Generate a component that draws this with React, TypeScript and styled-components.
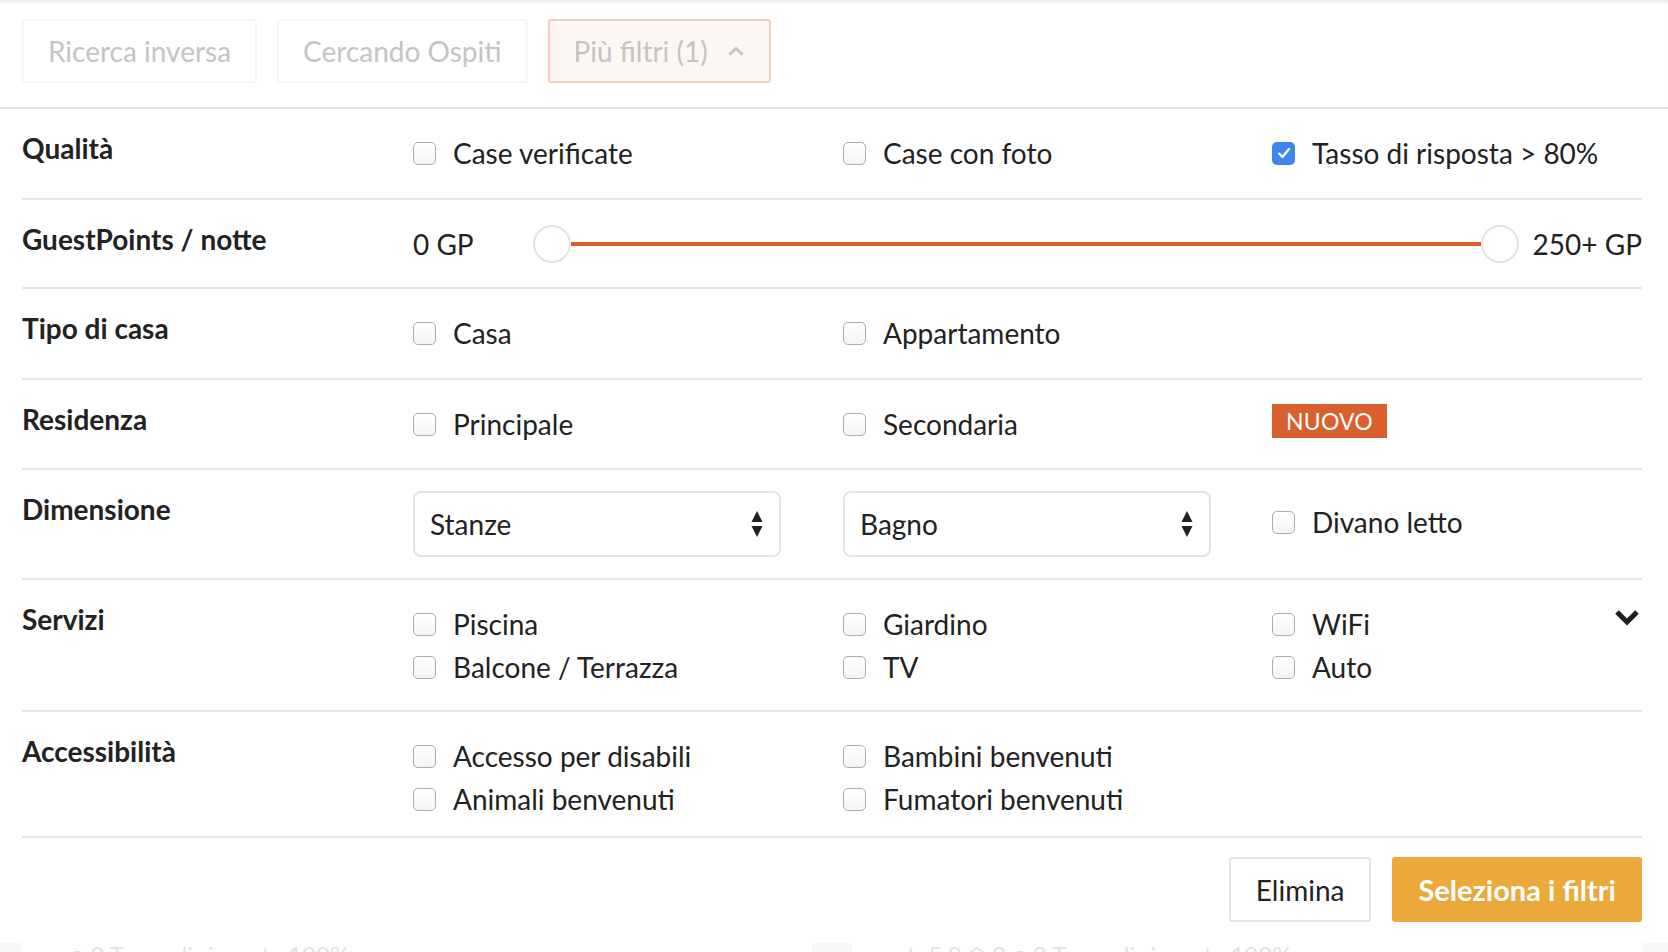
import React from "react";
import styled, { createGlobalStyle } from "styled-components";

const Global = createGlobalStyle`
  html, body { margin: 0; padding: 0; background: #fff; }
  body { font-family: Lato, "Open Sans", "Liberation Sans", sans-serif; color: #222; }
  * { box-sizing: border-box; }
`;

const Page = styled.div`
  width: 1668px;
  height: 952px;
  overflow: hidden;
  background: #fff;
  display: flex;
  flex-direction: column;
`;

const TabBar = styled.div`
  height: 109px;
  display: flex;
  gap: 20px;
  padding: 19px 22px 0;
  border-bottom: 2px solid #e4e4e4;
  box-shadow: inset 0 4px 4px -3px rgba(0, 0, 0, 0.14);
  flex-shrink: 0;
`;

const Tab = styled.button<{ $active?: boolean }>`
  height: 64px;
  padding: 0 24px;
  display: flex;
  align-items: center;
  gap: 19px;
  font-family: inherit;
  font-size: 28px;
  color: #c4c4c4;
  background: ${(p) => (p.$active ? "#fdf7f4" : "#fff")};
  border: 2px solid ${(p) => (p.$active ? "#f5cdbd" : "#f6f6f6")};
  border-radius: 3px;
`;

const Content = styled.div`
  padding: 0 26px 0 22px;
`;

const Row = styled.div<{ $h: number }>`
  height: ${(p) => p.$h}px;
  display: grid;
  grid-template-columns: 391px 430px 429px 1fr;
  align-items: start;
  padding-top: 21px;
  border-bottom: 2px solid #e6e6e6;
`;

const Label = styled.div`
  margin-top: 3px;
  font-size: 28px;
  font-weight: 700;
  line-height: 30px;
  color: #222;
`;

const Options = styled.div<{ $top?: number }>`
  margin-top: ${(p) => p.$top ?? 4}px;
  display: flex;
  flex-direction: column;
  gap: 5px;
`;

const Option = styled.label`
  height: 38px;
  display: flex;
  align-items: center;
  gap: 17px;
  font-size: 28px;
  color: #222;
  white-space: nowrap;
`;

const Box = styled.span<{ $checked?: boolean }>`
  width: 23px;
  height: 23px;
  flex-shrink: 0;
  border-radius: 5px;
  display: flex;
  align-items: center;
  justify-content: center;
  background: ${(p) => (p.$checked ? "#3d85f0" : "linear-gradient(#fff, #f4f4f4)")};
  border: ${(p) => (p.$checked ? "none" : "1.5px solid #adadad")};
`;

const Badge = styled.span`
  margin-top: 3px;
  width: 115px;
  height: 34px;
  display: flex;
  align-items: center;
  justify-content: center;
  background: #d9602c;
  color: #fff;
  font-size: 23px;
  letter-spacing: 0.2px;
`;

const SliderWrap = styled.div`
  grid-column: 2 / 5;
  margin-top: 4px;
  height: 38px;
  display: flex;
  align-items: center;
  font-size: 28px;
  color: #222;
`;

const Track = styled.div`
  flex: 1;
  height: 38px;
  margin: 0 14px 0 59px;
  display: flex;
  align-items: center;
`;

const Thumb = styled.span`
  width: 38px;
  height: 38px;
  border-radius: 50%;
  background: #fff;
  border: 2px solid #e2e2e2;
  flex-shrink: 0;
`;

const Line = styled.span`
  flex: 1;
  height: 4px;
  background: #d9602c;
`;

const Select = styled.div`
  width: 368px;
  height: 66px;
  border: 2px solid #e4e4e4;
  border-radius: 8px;
  padding: 0 16px 0 15px;
  display: flex;
  align-items: center;
  justify-content: space-between;
  font-size: 28px;
  color: #222;
`;

const CellRow = styled.div`
  display: flex;
  justify-content: space-between;
  align-items: flex-start;
`;

const Chevron = styled.span`
  margin-top: 8px;
  margin-right: 2px;
  display: flex;
`;

const Actions = styled.div`
  display: flex;
  justify-content: flex-end;
  gap: 21px;
  padding: 19px 26px 0 22px;
  height: 105px;
  flex-shrink: 0;
`;

const Button = styled.button<{ $primary?: boolean }>`
  height: 65px;
  padding: 0 ${(p) => (p.$primary ? 24 : 25)}px;
  font-family: inherit;
  font-size: ${(p) => (p.$primary ? 29 : 28)}px;
  font-weight: ${(p) => (p.$primary ? 700 : 400)};
  color: ${(p) => (p.$primary ? "#fff" : "#222")};
  background: ${(p) => (p.$primary ? "#eca93b" : "#fff")};
  border: 2px solid ${(p) => (p.$primary ? "#eca93b" : "#e4e4e4")};
  border-radius: 3px;
`;

const Ghost = styled.div`
  display: flex;
  height: 30px;
  flex-shrink: 0;
`;

const GhostCard = styled.div<{ $w: number }>`
  width: ${(p) => p.$w}px;
  display: flex;
  align-items: flex-start;
  padding: 0 0 0 48px;
  font-size: 24px;
  line-height: 1;
  color: #e2e2e2;
  background: #fff;
  white-space: nowrap;
`;

const GhostEdge = styled.div<{ $w: number }>`
  width: ${(p) => p.$w}px;
  background: #f8f8f8;
`;

const Check = ({ checked }: { checked?: boolean }) => (
  <Box $checked={checked}>
    {checked && (
      <svg width="14" height="12" viewBox="0 0 14 12">
        <path d="M2 6.5 L5.5 10 L12 2" fill="none" stroke="#fff" strokeWidth="2.4" strokeLinecap="round" strokeLinejoin="round" />
      </svg>
    )}
  </Box>
);

const Opt = ({ label, checked }: { label: string; checked?: boolean }) => (
  <Option>
    <Check checked={checked} />
    {label}
  </Option>
);

const Arrows = () => (
  <svg width="12" height="28" viewBox="0 0 12 28">
    <path d="M6 1 L11.5 12 H0.5 Z" fill="#222" />
    <path d="M6 27 L11.5 16 H0.5 Z" fill="#222" />
  </svg>
);

export default function App() {
  return (
    <Page>
      <Global />
      <TabBar>
        <Tab>Ricerca inversa</Tab>
        <Tab>Cercando Ospiti</Tab>
        <Tab $active>
          Più filtri (1)
          <svg width="18" height="11" viewBox="0 0 18 11">
            <path d="M2.5 8.5 L9 2.5 L15.5 8.5" fill="none" stroke="#c4c4c4" strokeWidth="3" />
          </svg>
        </Tab>
      </TabBar>
      <Content>
        <Row $h={91}>
          <Label>Qualità</Label>
          <Options><Opt label="Case verificate" /></Options>
          <Options><Opt label="Case con foto" /></Options>
          <Options><Opt label="Tasso di risposta > 80%" checked /></Options>
        </Row>
        <Row $h={89}>
          <Label>GuestPoints / notte</Label>
          <SliderWrap>
            0 GP
            <Track>
              <Thumb />
              <Line />
              <Thumb />
            </Track>
            250+ GP
          </SliderWrap>
        </Row>
        <Row $h={91}>
          <Label>Tipo di casa</Label>
          <Options><Opt label="Casa" /></Options>
          <Options><Opt label="Appartamento" /></Options>
        </Row>
        <Row $h={90}>
          <Label>Residenza</Label>
          <Options><Opt label="Principale" /></Options>
          <Options><Opt label="Secondaria" /></Options>
          <Badge>NUOVO</Badge>
        </Row>
        <Row $h={110}>
          <Label>Dimensione</Label>
          <Select>Stanze<Arrows /></Select>
          <Select>Bagno<Arrows /></Select>
          <Options $top={12}><Opt label="Divano letto" /></Options>
        </Row>
        <Row $h={132}>
          <Label>Servizi</Label>
          <Options>
            <Opt label="Piscina" />
            <Opt label="Balcone / Terrazza" />
          </Options>
          <Options>
            <Opt label="Giardino" />
            <Opt label="TV" />
          </Options>
          <CellRow>
            <Options>
              <Opt label="WiFi" />
              <Opt label="Auto" />
            </Options>
            <Chevron>
              <svg width="26" height="18" viewBox="0 0 26 18">
                <path d="M3 3 L13 13 L23 3" fill="none" stroke="#1d1d1d" strokeWidth="5" />
              </svg>
            </Chevron>
          </CellRow>
        </Row>
        <Row $h={126}>
          <Label>Accessibilità</Label>
          <Options>
            <Opt label="Accesso per disabili" />
            <Opt label="Animali benvenuti" />
          </Options>
          <Options>
            <Opt label="Bambini benvenuti" />
            <Opt label="Fumatori benvenuti" />
          </Options>
        </Row>
      </Content>
      <Actions>
        <Button>Elimina</Button>
        <Button $primary>Seleziona i filtri</Button>
      </Actions>
      <Ghost>
        <GhostEdge $w={22} />
        <GhostCard $w={790}>● 2 Tasso di risposta 100%</GhostCard>
        <GhostEdge $w={40} />
        <GhostCard $w={790}>★ 5.0 ⌂ 2 ● 2 Tasso di risposta 100%</GhostCard>
        <GhostEdge $w={26} />
      </Ghost>
    </Page>
  );
}
